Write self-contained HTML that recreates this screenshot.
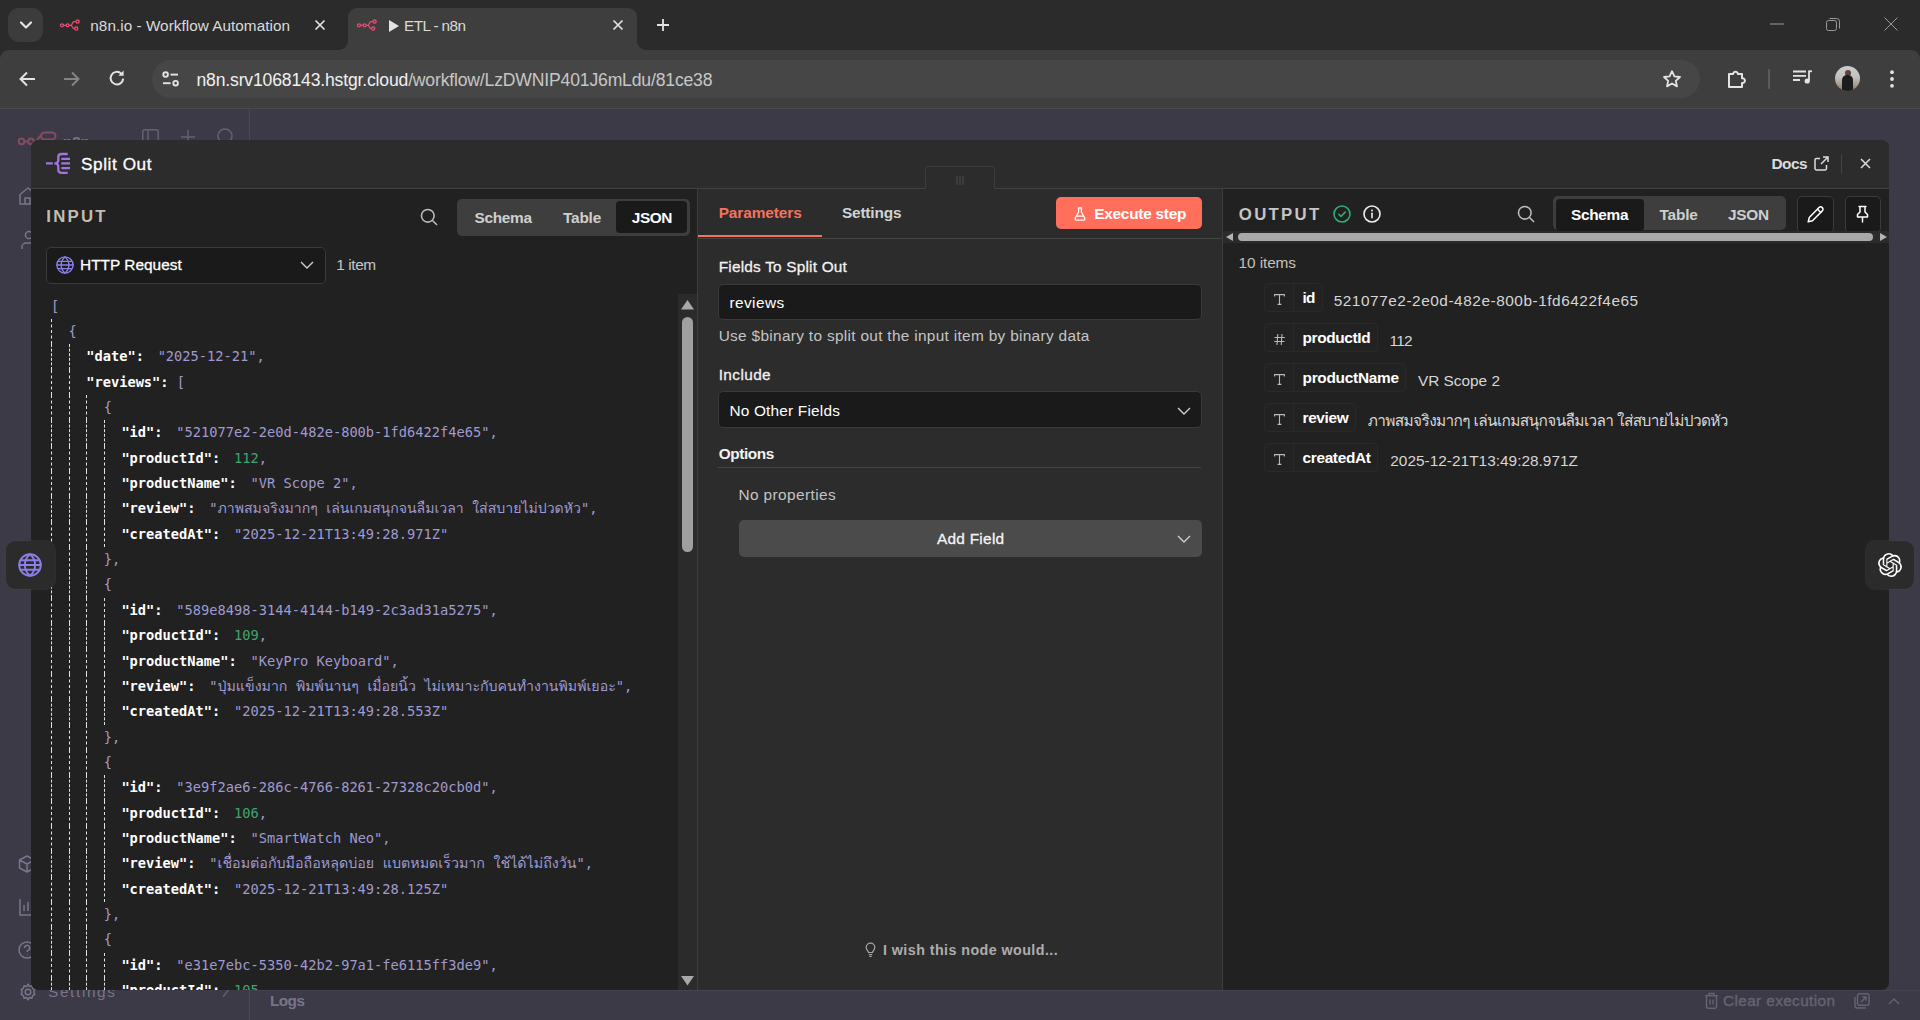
<!DOCTYPE html>
<html lang="en"><head><meta charset="utf-8"><title>ETL - n8n</title>
<style>
*{box-sizing:border-box;margin:0;padding:0}
html,body{width:1920px;height:1020px;overflow:hidden;background:#3c3a47;}
body{position:relative;font-family:"Liberation Sans","Loma","Noto Sans Thai",sans-serif;color:#fff;font-size:15px;}
.abs{position:absolute}
.t{position:absolute;white-space:nowrap;line-height:20px;height:20px;margin-top:-10px}
svg{position:absolute;overflow:visible}
/* chrome */
#tabstrip{position:absolute;left:0;top:0;width:1920px;height:62px;background:#2b2b2b}
#toolbar{position:absolute;left:0;top:50px;width:1920px;height:58px;background:#3e3e3e;border-radius:9px 9px 0 0}
#tbline{position:absolute;left:0;top:108px;width:1920px;height:1px;background:#4a4a52}
#acttab{position:absolute;left:348px;top:8px;width:289px;height:42px;background:#3e3e3e;border-radius:9px 9px 0 0}
#acttab:before,#acttab:after{content:"";position:absolute;bottom:0;width:10px;height:10px}
#acttab:before{left:-10px;background:radial-gradient(circle at 0 0,transparent 10px,#3e3e3e 10.5px)}
#acttab:after{right:-10px;background:radial-gradient(circle at 100% 0,transparent 10px,#3e3e3e 10.5px)}
#tabsearch{position:absolute;left:8px;top:8px;width:35px;height:34px;border-radius:11px;background:#3c3c3c}
#omni{position:absolute;left:152px;top:60px;width:1548px;height:38px;border-radius:19px;background:#464646}
.ctxt{color:#e3e3e3;font-size:15.5px}
/* page */
#page{position:absolute;left:0;top:109px;width:1920px;height:911px;background:#3c3a47}
.dim{color:#6f6d7c}
/* modal */
#modal{position:absolute;left:31px;top:140px;width:1858px;height:850px;border-radius:8px;background:#2c2c2c;overflow:hidden}
.tog{position:absolute;background:#3e3e3e;border-radius:5px}
.togact{position:absolute;background:#1a1a1a;border-radius:4px}
.field{position:absolute;background:#1a1a1a;border:1px solid #3a3a3a;border-radius:5px}
/* json */
#json{position:absolute;left:20px;top:104px;width:640px;height:700px;overflow:hidden;font-family:"DejaVu Sans Mono","Liberation Mono","Loma","Noto Sans Thai",monospace;font-size:13.7px;}
.jl{height:25.36px;line-height:25.36px;white-space:nowrap;display:flex}
.iu{display:inline-block;width:17.6px;height:25.36px;border-left:1px dashed #e2e2e2;flex:none}
.jc{padding-left:0}
.s,.n{margin-left:13.75px}
.b2{margin-left:8.25px}
.k{color:#fff;font-weight:bold}
.s{color:#a09ad0}
.br{color:#a09ad0}
.c{color:#a09ad0}
.n{color:#3fa66f}
/* schema */
.pill{position:absolute;height:29px;border:1px solid #292929;border-radius:4px;background:#222}
.pill .ic{position:absolute;left:0;top:0;width:29px;height:27px;border-right:1px solid #292929}
.sv{color:#d0d0d0}

</style></head>
<body>
<div id="tabstrip"></div>
<div id="tabsearch"></div>
<svg style="left:19px;top:20px" width="14" height="10" viewBox="0 0 14 10"><path d="M2 2.5 L7 7.5 L12 2.5" fill="none" stroke="#e3e3e3" stroke-width="2.2" stroke-linecap="round" stroke-linejoin="round"/></svg>
<div id="toolbar"></div>
<div id="acttab"></div>
<div id="tbline"></div>
<!-- favicons -->
<svg class="fav" style="left:60px;top:19px" width="21" height="13" viewBox="0 0 21 13"><g fill="none" stroke="#ea4b71" stroke-width="1.3"><circle cx="2" cy="6.3" r="1.5"/><circle cx="7.6" cy="6.3" r="1.5"/><circle cx="17.6" cy="2.6" r="1.6"/><circle cx="16.2" cy="9.6" r="1.6"/><path d="M3.5 6.3h2.6M9.1 6.3h1.6c1.6 0 1.4-3.6 3.4-3.6h1.9M10.7 6.3c1.8 0 1.5 3.3 3.3 3.3h.6"/></g></svg>
<svg class="fav" style="left:357px;top:19px" width="21" height="13" viewBox="0 0 21 13"><g fill="none" stroke="#ea4b71" stroke-width="1.3"><circle cx="2" cy="6.3" r="1.5"/><circle cx="7.6" cy="6.3" r="1.5"/><circle cx="17.6" cy="2.6" r="1.6"/><circle cx="16.2" cy="9.6" r="1.6"/><path d="M3.5 6.3h2.6M9.1 6.3h1.6c1.6 0 1.4-3.6 3.4-3.6h1.9M10.7 6.3c1.8 0 1.5 3.3 3.3 3.3h.6"/></g></svg>
<div class="t" id="tab1" style="left:90.3px;top:26px;font-size:15.3px;letter-spacing:0.037px;color:#dadada">n8n.io - Workflow Automation</div>
<svg style="left:314px;top:19px" width="12" height="12" viewBox="0 0 12 12"><path d="M1.5 1.5l9 9M10.5 1.5l-9 9" stroke="#e3e3e3" stroke-width="1.7" fill="none"/></svg>
<svg style="left:388px;top:19px" width="12" height="14" viewBox="0 0 12 14"><path d="M1 1l10 6-10 6z" fill="#e3e3e3"/></svg>
<div class="t" id="tab2" style="left:404px;top:26px;font-size:15.3px;letter-spacing:-0.576px;color:#dadada">ETL - n8n</div>
<svg style="left:612px;top:19px" width="12" height="12" viewBox="0 0 12 12"><path d="M1.5 1.5l9 9M10.5 1.5l-9 9" stroke="#e3e3e3" stroke-width="1.7" fill="none"/></svg>
<svg style="left:656px;top:18px" width="14" height="14" viewBox="0 0 14 14"><path d="M7 1v12M1 7h12" stroke="#e3e3e3" stroke-width="1.8" fill="none"/></svg>
<!-- window controls -->
<svg style="left:1770px;top:23px" width="14" height="2" viewBox="0 0 14 2"><path d="M0 1h14" stroke="#9a9a9a" stroke-width="1"/></svg>
<svg style="left:1826px;top:17px" width="14" height="14" viewBox="0 0 14 14"><rect x=".5" y="3.5" width="10" height="10" rx="2" fill="none" stroke="#9a9a9a"/><path d="M3.5 1.5h7a3 3 0 0 1 3 3v7" fill="none" stroke="#9a9a9a"/></svg>
<svg style="left:1884px;top:17px" width="14" height="14" viewBox="0 0 14 14"><path d="M.5.5l13 13M13.5.5l-13 13" stroke="#9a9a9a" stroke-width="1" fill="none"/></svg>
<!-- toolbar icons -->
<svg style="left:19px;top:71px" width="17" height="16" viewBox="0 0 17 16"><path d="M8 1.5L1.5 8 8 14.5M1.8 8H16" fill="none" stroke="#e3e3e3" stroke-width="2" stroke-linejoin="miter"/></svg>
<svg style="left:63px;top:71px" width="17" height="16" viewBox="0 0 17 16"><path d="M9 1.5L15.5 8 9 14.5M15.2 8H1" fill="none" stroke="#858585" stroke-width="2"/></svg>
<svg style="left:108px;top:69px" width="18" height="18" viewBox="0 0 18 18"><path d="M15.2 9.6A6.3 6.3 0 1 1 13.3 4.6" fill="none" stroke="#e3e3e3" stroke-width="2"/><path d="M15.6 1.6v5.2h-5.2z" fill="#e3e3e3"/></svg>
<div id="omni"></div>
<svg style="left:162px;top:71px" width="18" height="16" viewBox="0 0 18 16"><g fill="none" stroke="#e3e3e3" stroke-width="1.9"><circle cx="3.6" cy="3.6" r="2.3"/><path d="M8.5 3.6H16"/><circle cx="13.6" cy="12.2" r="2.3"/><path d="M1 12.2h7.6"/></g></svg>
<div class="t" id="url" style="left:196.5px;top:79.5px;font-size:17.6px;letter-spacing:-0.175px;color:#c6c6c6"><span style="color:#f0f0f0">n8n.srv1068143.hstgr.cloud</span>/workflow/LzDWNIP401J6mLdu/81ce38</div>
<svg style="left:1662px;top:69px" width="20" height="20" viewBox="0 0 20 20"><path d="M10 2.2l2.4 5.2 5.6.6-4.2 3.8 1.2 5.6L10 14.5l-5 2.9 1.2-5.6L2 8l5.6-.6z" fill="none" stroke="#e3e3e3" stroke-width="1.8" stroke-linejoin="round"/></svg>
<svg style="left:1726px;top:68px" width="21" height="21" viewBox="0 0 21 21"><path d="M3 6h4.2a2.3 2.3 0 1 1 4.6 0H16v4.3a2.4 2.4 0 1 1 0 4.7V19H3z" fill="none" stroke="#e3e3e3" stroke-width="2" stroke-linejoin="round"/></svg>
<div class="abs" style="left:1768px;top:69px;width:2px;height:20px;background:#5c5c5c;border-radius:1px"></div>
<svg style="left:1792px;top:69px" width="20" height="16" viewBox="0 0 20 16"><g fill="none" stroke="#e3e3e3" stroke-width="1.8"><path d="M1 2.5h13M1 6.8h13M1 11h7"/><path d="M17 1.5v10"/><path d="M17 2.3h3"/></g><circle cx="15.2" cy="12" r="2.6" fill="#e3e3e3"/></svg>
<div class="abs" style="left:1835px;top:66px;width:25px;height:25px;border-radius:13px;background:linear-gradient(180deg,#c9cdd2 0%,#c4c0bb 45%,#a59a90 75%,#7d7369 100%);overflow:hidden"><div class="abs" style="left:10px;top:3.500px;width:5.500px;height:6px;border-radius:3px;background:#5a4238"></div><div class="abs" style="left:7px;top:8.500px;width:11px;height:17px;border-radius:5px 5px 2px 2px;background:#1c1c1e"></div></div>
<svg style="left:1890px;top:70px" width="4" height="18" viewBox="0 0 4 18"><circle cx="2" cy="2.2" r="1.9" fill="#e3e3e3"/><circle cx="2" cy="9" r="1.9" fill="#e3e3e3"/><circle cx="2" cy="15.8" r="1.9" fill="#e3e3e3"/></svg>

<div id="page"></div>
<div class="abs" id="logline" style="left:250px;top:990px;width:1670px;height:1px;background:#45434f"></div>
<div class="abs" style="left:249px;top:109px;width:1px;height:911px;background:#4a4856"></div>
<!-- dim n8n logo + header icons (mostly hidden) -->
<svg style="left:17px;top:130px" width="42" height="18" viewBox="0 0 42 18"><g fill="none" stroke="#874a61" stroke-width="2"><circle cx="4.500" cy="11.400" r="2.800"/><circle cx="14" cy="11.400" r="2.800"/><rect x="24" y="2.500" width="14.500" height="7" rx="3.500"/><path d="M7.300 11.400h3.900M16.800 11.400h2c2.500 0 2.200-5.400 5.200-5.400"/></g></svg>
<div class="t" id="un8n" style="left:62.7px;top:141.5px;font-size:15px;letter-spacing:0.314px;font-weight:bold;color:#77758a">n8n</div>
<svg style="left:142px;top:129px" width="17" height="16" viewBox="0 0 17 16"><g fill="none" stroke="#636173" stroke-width="1.5"><rect x=".8" y=".8" width="15.4" height="14.4" rx="2"/><path d="M6 .8v14.4"/></g></svg>
<svg style="left:181px;top:130px" width="14" height="14" viewBox="0 0 14 14"><path d="M7 0v14M0 7h14" stroke="#636173" stroke-width="1.5"/></svg>
<svg style="left:217px;top:128px" width="17" height="17" viewBox="0 0 17 17"><circle cx="8" cy="8" r="7" fill="none" stroke="#636173" stroke-width="1.5"/></svg>
<!-- left sidebar icons -->
<svg style="left:19px;top:187px" width="16" height="18" viewBox="0 0 16 18"><path d="M1 17V7.5L9 1l6 5v11z" fill="none" stroke="#77758a" stroke-width="1.5" stroke-linejoin="round"/><path d="M6 17v-6h5v6" fill="none" stroke="#77758a" stroke-width="1.5"/></svg>
<svg style="left:21px;top:230px" width="16" height="20" viewBox="0 0 16 20"><circle cx="8" cy="5" r="3.6" fill="none" stroke="#77758a" stroke-width="1.5"/><path d="M1 19v-2a4 4 0 0 1 4-4h8" fill="none" stroke="#77758a" stroke-width="1.5"/></svg>
<svg style="left:18px;top:855px" width="18" height="18" viewBox="0 0 18 18"><path d="M9 1L1.5 5v8L9 17l7.500-4V5z M1.500 5L9 9l7.500-4M9 9v8" fill="none" stroke="#77758a" stroke-width="1.5" stroke-linejoin="round"/></svg>
<svg style="left:19px;top:898px" width="16" height="18" viewBox="0 0 16 18"><path d="M1 1v16h14M5 13V7M9 13V4M13 13v-4" fill="none" stroke="#77758a" stroke-width="1.5"/></svg>
<svg style="left:18px;top:941px" width="18" height="18" viewBox="0 0 18 18"><circle cx="9" cy="9" r="8" fill="none" stroke="#77758a" stroke-width="1.5"/><path d="M6.500 7a2.600 2.600 0 1 1 3.500 2.400c-.7.300-1 .8-1 1.600M9 13.500v.5" fill="none" stroke="#77758a" stroke-width="1.5"/></svg>
<svg style="left:19px;top:983px" width="18" height="18" viewBox="0 0 18 18"><circle cx="9" cy="9" r="2.800" fill="none" stroke="#77758a" stroke-width="1.500"/><path d="M9 1.200l1.300 2.300 2.600-.7.700 2.600 2.300 1.300-1.200 2.300 1.200 2.300-2.300 1.300-.7 2.600-2.600-.7L9 16.800l-1.300-2.300-2.600.7-.7-2.600-2.300-1.300L3.300 9 2.100 6.700l2.300-1.300.7-2.600 2.600.7z" fill="none" stroke="#77758a" stroke-width="1.500" stroke-linejoin="round"/></svg>
<div class="t" id="uset" style="left:48px;top:992px;font-size:15.4px;letter-spacing:1.625px;color:#77758a">Settings</div>
<svg style="left:222px;top:988px" width="8" height="10" viewBox="0 0 8 10"><path d="M1 9l6-8" stroke="#636173" stroke-width="1.300"/></svg>
<div class="t" id="logs" style="left:270px;top:1001px;font-size:15.4px;letter-spacing:-0.589px;font-weight:bold;color:#77758a">Logs</div>
<!-- bottom right -->
<svg style="left:1704px;top:992px" width="15" height="17" viewBox="0 0 15 17"><g fill="none" stroke="#656373" stroke-width="1.400"><path d="M1 3.700h13M5 3.700V1.500h5v2.200M2.500 3.700v11a1.500 1.500 0 0 0 1.500 1.500h7a1.500 1.500 0 0 0 1.500-1.500v-11M6 7.500v5M9 7.500v5"/></g></svg>
<div class="t" id="clearex" style="left:1723px;top:1001px;font-size:15.4px;letter-spacing:0.360px;-webkit-text-stroke:0.4px currentColor;color:#656373">Clear execution</div>
<svg style="left:1854px;top:993px" width="16" height="16" viewBox="0 0 16 16"><g fill="none" stroke="#656373" stroke-width="1.400"><rect x="3.500" y=".8" width="11.500" height="11.500" rx="2"/><path d="M1 4v9a2 2 0 0 0 2 2h9M7 9l5-5M8.500 4H12v3.500"/></g></svg>
<svg style="left:1888px;top:997px" width="12" height="8" viewBox="0 0 12 8"><path d="M1 7l5-5 5 5" fill="none" stroke="#656373" stroke-width="1.400"/></svg>

<div id="modal"><div class="abs" style="left:-31px;top:-140px;width:1920px;height:1020px">
<!-- panels (page coords) -->
<div class="abs" style="left:31px;top:140px;width:1858px;height:49px;background:#2c2c2c"></div>
<div class="abs" style="left:31px;top:188px;width:1858px;height:1px;background:#414141"></div>
<div class="abs" id="pin" style="left:31px;top:189px;width:666px;height:801px;background:#212121"></div>
<div class="abs" id="pmain" style="left:697px;top:189px;width:526px;height:801px;background:#2c2c2c;border-left:1px solid #3d3d3d;border-right:1px solid #3d3d3d"></div>
<div class="abs" id="pout" style="left:1223px;top:189px;width:666px;height:801px;background:#212121"></div>
<!-- drag handle -->
<div class="abs" style="left:925px;top:166px;width:70px;height:23px;background:#2c2c2c;border:1px solid #3c3c3c;border-bottom:none;border-radius:4px 4px 0 0"></div>
<svg style="left:956px;top:176px" width="8" height="9" viewBox="0 0 8 9"><path d="M1 0v9M4 0v9M7 0v9" stroke="#4d4d4d" stroke-width="1"/></svg>
<!-- header -->
<svg style="left:46px;top:152px" width="24" height="23" viewBox="0 0 24 23"><g fill="none" stroke="#a373de" stroke-width="2.300"><path d="M0 11.400h6.800"/><path d="M21.700 2H15.500c-2.200 0-3.200 1-3.200 3v2.900c0 2.200-1.400 3.500-3.900 3.500c2.500 0 3.900 1.300 3.900 3.500v2.900c0 2 1 3 3.200 3h6.200"/><path d="M15.300 6.800H24M15.300 11.400H24M15.300 16.100H24"/></g></svg>
<div class="t" id="ttl" style="left:81px;top:163.5px;font-size:17.2px;letter-spacing:0.572px;-webkit-text-stroke:0.28px currentColor;color:#fff">Split Out</div>
<div class="t" id="docs" style="left:1771.5px;top:163.5px;font-size:15.4px;letter-spacing:-0.547px;font-weight:bold;color:#dcdcdc">Docs</div>
<svg style="left:1814px;top:156px" width="15" height="15" viewBox="0 0 15 15"><g fill="none" stroke="#dcdcdc" stroke-width="1.500"><path d="M6 2.500H2.500a1.500 1.500 0 0 0-1.500 1.500v8.500A1.500 1.500 0 0 0 2.500 14H11a1.500 1.500 0 0 0 1.500-1.500V9"/><path d="M9 1h5v5M14 1L7 8"/></g></svg>
<div class="abs" style="left:1841px;top:154px;width:1px;height:20px;background:#444"></div>
<svg style="left:1860px;top:158px" width="11" height="11" viewBox="0 0 11 11"><path d="M1 1l9 9M10 1l-9 9" stroke="#dcdcdc" stroke-width="1.500" fill="none"/></svg>

<!-- INPUT panel -->
<div class="t" id="inlab" style="left:46.3px;top:217px;font-size:16.8px;letter-spacing:2.239px;font-weight:bold;color:#c2bdb3">INPUT</div>
<svg style="left:419.500px;top:208.200px" width="18.500" height="18.500" viewBox="0 0 19 19"><g fill="none" stroke="#bdbdbd" stroke-width="1.600"><circle cx="8" cy="8" r="6.500"/><path d="M12.800 12.800l4.700 4.700"/></g></svg>
<div class="tog" style="left:457px;top:199px;width:233px;height:37px"></div>
<div class="togact" style="left:616px;top:201px;width:71px;height:32px"></div>
<div class="t" id="is" style="left:474.5px;top:217.6px;font-size:15.4px;letter-spacing:-0.306px;font-weight:bold;color:#cfcfcf">Schema</div>
<div class="t" id="it" style="left:563px;top:217.6px;font-size:15.4px;letter-spacing:-0.216px;font-weight:bold;color:#cfcfcf">Table</div>
<div class="t" id="ij" style="left:631.8px;top:217.6px;font-size:15.4px;letter-spacing:-0.407px;font-weight:bold;color:#fff">JSON</div>
<div class="field" style="left:46px;top:247px;width:279.500px;height:36.500px"></div>
<svg class="globe" style="left:56px;top:256px" width="18" height="18" viewBox="0 0 24 24"><g fill="none" stroke="#8b7fe8" stroke-width="1.800" stroke-linecap="round"><circle cx="12" cy="12" r="10.800"/><path d="M12 1.200a14 14 0 0 0 0 21.600a14 14 0 0 0 0-21.600"/><path d="M1.200 12h21.600M3 7.200h18M3 16.800h18"/></g></svg>
<div class="t" id="hreq" style="left:80px;top:264.5px;font-size:15.4px;letter-spacing:0.017px;-webkit-text-stroke:0.28px currentColor;color:#fff">HTTP Request</div>
<svg style="left:300px;top:261px" width="14" height="8" viewBox="0 0 14 8"><path d="M1 1l6 6 6-6" fill="none" stroke="#cfcfcf" stroke-width="1.400"/></svg>
<div class="t" id="oneitem" style="left:336.2px;top:264.5px;font-size:15.4px;letter-spacing:-0.384px;color:#c6c6c6">1 item</div>
<div id="json" style="left:51px;top:293.500px;width:626px;height:697px">
<div class="jl"><span class="jc"><span class="br">[</span></span></div>
<div class="jl"><i class="iu"></i><span class="jc"><span class="br">{</span></span></div>
<div class="jl"><i class="iu"></i><i class="iu"></i><span class="jc"><b class="k">"date":</b><span class="s">"2025-12-21"</span><span class="c">,</span></span></div>
<div class="jl"><i class="iu"></i><i class="iu"></i><span class="jc"><b class="k">"reviews":</b><span class="br b2">[</span></span></div>
<div class="jl"><i class="iu"></i><i class="iu"></i><i class="iu"></i><span class="jc"><span class="br">{</span></span></div>
<div class="jl"><i class="iu"></i><i class="iu"></i><i class="iu"></i><i class="iu"></i><span class="jc"><b class="k">"id":</b><span class="s">"521077e2-2e0d-482e-800b-1fd6422f4e65"</span><span class="c">,</span></span></div>
<div class="jl"><i class="iu"></i><i class="iu"></i><i class="iu"></i><i class="iu"></i><span class="jc"><b class="k">"productId":</b><span class="n">112</span><span class="c">,</span></span></div>
<div class="jl"><i class="iu"></i><i class="iu"></i><i class="iu"></i><i class="iu"></i><span class="jc"><b class="k">"productName":</b><span class="s">"VR Scope 2"</span><span class="c">,</span></span></div>
<div class="jl"><i class="iu"></i><i class="iu"></i><i class="iu"></i><i class="iu"></i><span class="jc"><b class="k">"review":</b><span class="s">"<span id="th0" style="font-size:14.08px">ภาพสมจริงมากๆ เล่นเกมสนุกจนลืมเวลา ใส่สบายไม่ปวดหัว</span>"</span><span class="c">,</span></span></div>
<div class="jl"><i class="iu"></i><i class="iu"></i><i class="iu"></i><i class="iu"></i><span class="jc"><b class="k">"createdAt":</b><span class="s">"2025-12-21T13:49:28.971Z"</span></span></div>
<div class="jl"><i class="iu"></i><i class="iu"></i><i class="iu"></i><span class="jc"><span class="br">}</span><span class="c">,</span></span></div>
<div class="jl"><i class="iu"></i><i class="iu"></i><i class="iu"></i><span class="jc"><span class="br">{</span></span></div>
<div class="jl"><i class="iu"></i><i class="iu"></i><i class="iu"></i><i class="iu"></i><span class="jc"><b class="k">"id":</b><span class="s">"589e8498-3144-4144-b149-2c3ad31a5275"</span><span class="c">,</span></span></div>
<div class="jl"><i class="iu"></i><i class="iu"></i><i class="iu"></i><i class="iu"></i><span class="jc"><b class="k">"productId":</b><span class="n">109</span><span class="c">,</span></span></div>
<div class="jl"><i class="iu"></i><i class="iu"></i><i class="iu"></i><i class="iu"></i><span class="jc"><b class="k">"productName":</b><span class="s">"KeyPro Keyboard"</span><span class="c">,</span></span></div>
<div class="jl"><i class="iu"></i><i class="iu"></i><i class="iu"></i><i class="iu"></i><span class="jc"><b class="k">"review":</b><span class="s">"<span id="th1" style="font-size:14.16px">ปุ่มแข็งมาก พิมพ์นานๆ เมื่อยนิ้ว ไม่เหมาะกับคนทำงานพิมพ์เยอะ</span>"</span><span class="c">,</span></span></div>
<div class="jl"><i class="iu"></i><i class="iu"></i><i class="iu"></i><i class="iu"></i><span class="jc"><b class="k">"createdAt":</b><span class="s">"2025-12-21T13:49:28.553Z"</span></span></div>
<div class="jl"><i class="iu"></i><i class="iu"></i><i class="iu"></i><span class="jc"><span class="br">}</span><span class="c">,</span></span></div>
<div class="jl"><i class="iu"></i><i class="iu"></i><i class="iu"></i><span class="jc"><span class="br">{</span></span></div>
<div class="jl"><i class="iu"></i><i class="iu"></i><i class="iu"></i><i class="iu"></i><span class="jc"><b class="k">"id":</b><span class="s">"3e9f2ae6-286c-4766-8261-27328c20cb0d"</span><span class="c">,</span></span></div>
<div class="jl"><i class="iu"></i><i class="iu"></i><i class="iu"></i><i class="iu"></i><span class="jc"><b class="k">"productId":</b><span class="n">106</span><span class="c">,</span></span></div>
<div class="jl"><i class="iu"></i><i class="iu"></i><i class="iu"></i><i class="iu"></i><span class="jc"><b class="k">"productName":</b><span class="s">"SmartWatch Neo"</span><span class="c">,</span></span></div>
<div class="jl"><i class="iu"></i><i class="iu"></i><i class="iu"></i><i class="iu"></i><span class="jc"><b class="k">"review":</b><span class="s">"<span id="th2" style="font-size:14.27px">เชื่อมต่อกับมือถือหลุดบ่อย แบตหมดเร็วมาก ใช้ได้ไม่ถึงวัน</span>"</span><span class="c">,</span></span></div>
<div class="jl"><i class="iu"></i><i class="iu"></i><i class="iu"></i><i class="iu"></i><span class="jc"><b class="k">"createdAt":</b><span class="s">"2025-12-21T13:49:28.125Z"</span></span></div>
<div class="jl"><i class="iu"></i><i class="iu"></i><i class="iu"></i><span class="jc"><span class="br">}</span><span class="c">,</span></span></div>
<div class="jl"><i class="iu"></i><i class="iu"></i><i class="iu"></i><span class="jc"><span class="br">{</span></span></div>
<div class="jl"><i class="iu"></i><i class="iu"></i><i class="iu"></i><i class="iu"></i><span class="jc"><b class="k">"id":</b><span class="s">"e31e7ebc-5350-42b2-97a1-fe6115ff3de9"</span><span class="c">,</span></span></div>
<div class="jl"><i class="iu"></i><i class="iu"></i><i class="iu"></i><i class="iu"></i><span class="jc"><b class="k">"productId":</b><span class="n">105</span><span class="c">,</span></span></div>
</div>
<!-- v scrollbar -->
<div class="abs" style="left:678px;top:294px;width:19px;height:696px;background:#2b2b2b"></div>
<svg style="left:681px;top:300px" width="13" height="9.500" viewBox="0 0 13 9.500"><path d="M0 9.500L6.500 0L13 9.500z" fill="#a8a8a8"/></svg>
<div class="abs" style="left:682px;top:317px;width:11px;height:235px;border-radius:6px;background:#a0a0a0"></div>
<svg style="left:681px;top:975.500px" width="13" height="9.500" viewBox="0 0 13 9.500"><path d="M0 0L6.500 9.500L13 0z" fill="#a8a8a8"/></svg>

<!-- center panel -->
<div class="t" id="par" style="left:718.7px;top:213px;font-size:15.4px;letter-spacing:-0.095px;font-weight:bold;color:#f4735f">Parameters</div>
<div class="t" id="set" style="left:841.9px;top:213px;font-size:15.4px;letter-spacing:-0.160px;font-weight:bold;color:#d2d2d2">Settings</div>
<div class="abs" style="left:698px;top:238px;width:524px;height:1px;background:#444"></div>
<div class="abs" style="left:698px;top:234.800px;width:124px;height:2.600px;background:#f4735f"></div>
<div class="abs" style="left:1056px;top:197px;width:146px;height:32px;border-radius:5px;background:#ff6f5c"></div>
<svg style="left:1073.500px;top:206.800px" width="12" height="13.800" viewBox="0 0 13 15"><g fill="none" stroke="#fff" stroke-width="1.400" stroke-linejoin="round"><path d="M4.200 1h4.600M5 1v4.500L1.300 12.300c-.5 1 .2 1.900 1.200 1.900h8c1 0 1.700-.9 1.200-1.900L8 5.500V1"/><path d="M3 10h7"/></g></svg>
<div class="t" id="exe" style="left:1094.2px;top:213.5px;font-size:15.4px;letter-spacing:-0.250px;font-weight:bold;color:#fff">Execute step</div>
<div class="t" id="ftso" style="left:718.7px;top:267px;font-size:15.4px;letter-spacing:0.199px;-webkit-text-stroke:0.28px currentColor;color:#f2f2f2">Fields To Split Out</div>
<div class="field" style="left:718px;top:284px;width:484px;height:36px"></div>
<div class="t" id="rev" style="left:729.4px;top:303px;font-size:15.4px;letter-spacing:0.438px;color:#fff">reviews</div>
<div class="t" id="hint" style="left:718.7px;top:336px;font-size:15.4px;letter-spacing:0.312px;color:#c4c4c4">Use $binary to split out the input item by binary data</div>
<div class="t" id="inc" style="left:718.7px;top:375.3px;font-size:15.4px;letter-spacing:0.393px;-webkit-text-stroke:0.28px currentColor;color:#f2f2f2">Include</div>
<div class="field" style="left:718px;top:391px;width:484px;height:37px"></div>
<div class="t" id="nof" style="left:729.4px;top:411px;font-size:15.4px;letter-spacing:0.194px;color:#fff">No Other Fields</div>
<svg style="left:1177px;top:407px" width="14" height="8" viewBox="0 0 14 8"><path d="M1 1l6 6 6-6" fill="none" stroke="#cfcfcf" stroke-width="1.400"/></svg>
<div class="t" id="opt" style="left:718.7px;top:454px;font-size:15.4px;letter-spacing:-0.407px;font-weight:bold;color:#f2f2f2">Options</div>
<div class="abs" style="left:718px;top:467px;width:483px;height:1px;background:#444"></div>
<div class="t" id="nop" style="left:738.4px;top:494.8px;font-size:15.4px;letter-spacing:0.409px;color:#c4c4c4">No properties</div>
<div class="abs" style="left:738.500px;top:520px;width:463.500px;height:37px;border-radius:5px;background:#4b4b4b"></div>
<div class="t" id="addf" style="left:936.9px;top:538.5px;font-size:15.4px;letter-spacing:0.284px;-webkit-text-stroke:0.28px currentColor;color:#f4f4f4">Add Field</div>
<svg style="left:1177px;top:535px" width="14" height="8" viewBox="0 0 14 8"><path d="M1 1l6 6 6-6" fill="none" stroke="#cfcfcf" stroke-width="1.400"/></svg>
<svg style="left:865px;top:942px" width="11" height="15" viewBox="0 0 11 15"><g fill="none" stroke="#a8a8a8" stroke-width="1.200"><path d="M3.500 10.500c0-1.600-2.300-2.500-2.300-5a4.300 4.300 0 0 1 8.600 0c0 2.500-2.300 3.400-2.300 5z"/><path d="M3.800 12.500h3.400M4.300 14.300h2.400"/></g></svg>
<div class="t" id="wish" style="left:883px;top:949.6px;font-size:14.3px;letter-spacing:0.428px;font-weight:bold;color:#adadad">I wish this node would...</div>

<!-- OUTPUT panel -->
<div class="t" id="outlab" style="left:1238.8px;top:214.7px;font-size:16.8px;letter-spacing:2.280px;font-weight:bold;color:#c6c6c6">OUTPUT</div>
<svg style="left:1333px;top:205px" width="18" height="18" viewBox="0 0 18 18"><g fill="none" stroke="#2fac74" stroke-width="1.600"><circle cx="9" cy="9" r="8"/><path d="M5.800 9.300l2.200 2.200 4.200-4.400" stroke-linecap="round" stroke-linejoin="round"/></g></svg>
<svg style="left:1363px;top:205px" width="18" height="18" viewBox="0 0 18 18"><g fill="none" stroke="#ececec" stroke-width="1.600"><circle cx="9" cy="9" r="8"/><path d="M9 8.300v4.500" stroke-linecap="round"/></g><circle cx="9" cy="5.500" r="1" fill="#ececec"/></svg>
<svg style="left:1516.500px;top:205.200px" width="18.500" height="18.500" viewBox="0 0 19 19"><g fill="none" stroke="#bdbdbd" stroke-width="1.600"><circle cx="8" cy="8" r="6.500"/><path d="M12.800 12.800l4.700 4.700"/></g></svg>
<div class="tog" style="left:1553px;top:196px;width:233px;height:34px"></div>
<div class="togact" style="left:1556px;top:198.500px;width:88px;height:32px"></div>
<div class="t" id="os" style="left:1571px;top:215.1px;font-size:15.4px;letter-spacing:-0.306px;font-weight:bold;color:#fff">Schema</div>
<div class="t" id="ot" style="left:1659.4px;top:215.1px;font-size:15.4px;letter-spacing:-0.141px;font-weight:bold;color:#cfcfcf">Table</div>
<div class="t" id="oj" style="left:1728px;top:215.1px;font-size:15.4px;letter-spacing:-0.307px;font-weight:bold;color:#cfcfcf">JSON</div>
<div class="field" style="left:1796.500px;top:196px;width:37px;height:37px"></div>
<div class="field" style="left:1844.500px;top:196px;width:36px;height:37px"></div>
<svg style="left:1807px;top:206px" width="17" height="17" viewBox="0 0 17 17"><g fill="none" stroke="#fff" stroke-width="1.500" stroke-linejoin="round"><path d="M12 1.600a2.300 2.300 0 0 1 3.300 3.300L5.500 14.700 1.200 15.800l1.100-4.300z"/><path d="M10.500 3.200l3.300 3.300"/></g></svg>
<svg style="left:1855px;top:205px" width="15" height="19" viewBox="0 0 15 19"><g fill="none" stroke="#fff" stroke-width="1.500" stroke-linejoin="round" stroke-linecap="round"><path d="M4 1.500h7M5 1.500v5.500L2.500 9.500v2.500h10V9.500L10 7V1.500M7.500 12v5"/></g></svg>
<!-- h scrollbar -->
<div class="abs" style="left:1223px;top:231px;width:666px;height:12px;background:#2b2b2b"></div>
<svg style="left:1226px;top:233px" width="7" height="8" viewBox="0 0 7 8"><path d="M7 0L0 4L7 8z" fill="#b4b4b4"/></svg>
<div class="abs" style="left:1238px;top:233px;width:635px;height:8px;border-radius:4px;background:#a9a9a9"></div>
<svg style="left:1879.500px;top:233px" width="7" height="8" viewBox="0 0 7 8"><path d="M0 0L7 4L0 8z" fill="#b4b4b4"/></svg>
<div class="t" id="tenitems" style="left:1238.6px;top:263px;font-size:15.4px;letter-spacing:-0.110px;color:#c4c0ba">10 items</div>
<div class="pill" style="left:1263.5px;top:283.0px;width:59.0px"><div class="ic"></div></div>
<svg style="left:1273.5px;top:293.5px" width="11" height="11" viewBox="0 0 11 11"><path d="M.6 2.600V.6h9.800v2M5.500.6v9.800M3.600 10.400h3.800" fill="none" stroke="#b9b9b9" stroke-width="1.100"/></svg>
<div class="t" id="sn0" style="left:1302.5px;top:298.0px;font-size:15.4px;letter-spacing:-0.688px;font-weight:bold;color:#fff">id</div>
<div class="t" id="sv0" style="left:1333.7px;top:300.5px;font-size:15.4px;letter-spacing:0.533px;color:#d6d6d6">521077e2-2e0d-482e-800b-1fd6422f4e65</div>
<div class="pill" style="left:1263.5px;top:323.0px;width:114.1px"><div class="ic"></div></div>
<svg style="left:1273.5px;top:333.5px" width="11" height="11" viewBox="0 0 11 11"><path d="M3.800 0L3 11M8 0L7.200 11M.5 3.500h10.300M.2 7.500h10.300" fill="none" stroke="#b9b9b9" stroke-width="1.100"/></svg>
<div class="t" id="sn1" style="left:1302.5px;top:338.0px;font-size:15.4px;letter-spacing:-0.359px;font-weight:bold;color:#fff">productId</div>
<div class="t" id="sv1" style="left:1389.5px;top:340.5px;font-size:15.4px;letter-spacing:-0.700px;color:#d6d6d6">112</div>
<div class="pill" style="left:1263.5px;top:363.0px;width:142.5px"><div class="ic"></div></div>
<svg style="left:1273.5px;top:373.5px" width="11" height="11" viewBox="0 0 11 11"><path d="M.6 2.600V.6h9.800v2M5.500.6v9.800M3.600 10.400h3.800" fill="none" stroke="#b9b9b9" stroke-width="1.100"/></svg>
<div class="t" id="sn2" style="left:1302.5px;top:378.0px;font-size:15.4px;letter-spacing:-0.270px;font-weight:bold;color:#fff">productName</div>
<div class="t" id="sv2" style="left:1418px;top:380.5px;font-size:15.4px;letter-spacing:-0.016px;color:#d6d6d6">VR Scope 2</div>
<div class="pill" style="left:1263.5px;top:403.0px;width:92.2px"><div class="ic"></div></div>
<svg style="left:1273.5px;top:413.5px" width="11" height="11" viewBox="0 0 11 11"><path d="M.6 2.600V.6h9.800v2M5.500.6v9.800M3.600 10.400h3.800" fill="none" stroke="#b9b9b9" stroke-width="1.100"/></svg>
<div class="t" id="sn3" style="left:1302.5px;top:418.0px;font-size:15.4px;letter-spacing:-0.344px;font-weight:bold;color:#fff">review</div>
<div class="t" id="sv3" style="left:1367.7px;top:420.5px;font-size:15.4px;letter-spacing:-0.616px;color:#d6d6d6">ภาพสมจริงมากๆ เล่นเกมสนุกจนลืมเวลา ใส่สบายไม่ปวดหัว</div>
<div class="pill" style="left:1263.5px;top:443.0px;width:114.4px"><div class="ic"></div></div>
<svg style="left:1273.5px;top:453.5px" width="11" height="11" viewBox="0 0 11 11"><path d="M.6 2.600V.6h9.800v2M5.500.6v9.800M3.600 10.400h3.800" fill="none" stroke="#b9b9b9" stroke-width="1.100"/></svg>
<div class="t" id="sn4" style="left:1302.5px;top:458.0px;font-size:15.4px;letter-spacing:-0.325px;font-weight:bold;color:#fff">createdAt</div>
<div class="t" id="sv4" style="left:1390.3px;top:460.5px;font-size:15.4px;letter-spacing:0.013px;color:#d6d6d6">2025-12-21T13:49:28.971Z</div>
</div></div>
<!-- floating buttons -->
<div class="abs" style="left:6px;top:541px;width:49px;height:48px;border-radius:9px;background:#2b2b2b;box-shadow:0 0 0 1px rgba(70,70,70,.35)"></div>
<svg style="left:18px;top:553px" width="24" height="24" viewBox="0 0 24 24"><g fill="none" stroke="#8b7fe8" stroke-width="1.900" stroke-linecap="round"><circle cx="12" cy="12" r="10.800"/><path d="M12 1.200a14 14 0 0 0 0 21.600a14 14 0 0 0 0-21.600"/><path d="M1.200 12h21.600M3 7.200h18M3 16.800h18"/></g></svg>
<div class="abs" style="left:1866px;top:541px;width:48px;height:48px;border-radius:9px;background:#2b2b2b;box-shadow:0 0 0 1px rgba(70,70,70,.35)"></div>
<svg style="left:1878px;top:553px" width="24" height="24" viewBox="0 0 24 24"><path fill="#fff" d="M22.2819 9.8211a5.9847 5.9847 0 0 0-.5157-4.9108 6.0462 6.0462 0 0 0-6.5098-2.9A6.0651 6.0651 0 0 0 4.9807 4.1818a5.9847 5.9847 0 0 0-3.9977 2.9 6.0462 6.0462 0 0 0 .7427 7.0966 5.98 5.98 0 0 0 .511 4.9107 6.051 6.051 0 0 0 6.5146 2.9001A5.9847 5.9847 0 0 0 13.2599 24a6.0557 6.0557 0 0 0 5.7718-4.2058 5.9894 5.9894 0 0 0 3.9977-2.9001 6.0557 6.0557 0 0 0-.7475-7.0729zm-9.022 12.6081a4.4755 4.4755 0 0 1-2.8764-1.0408l.1419-.0804 4.7783-2.7582a.7948.7948 0 0 0 .3927-.6813v-6.7369l2.02 1.1686a.071.071 0 0 1 .038.052v5.5826a4.504 4.504 0 0 1-4.4945 4.4944zm-9.6607-4.1254a4.4708 4.4708 0 0 1-.5346-3.0137l.142.0852 4.783 2.7582a.7712.7712 0 0 0 .7806 0l5.8428-3.3685v2.3324a.0804.0804 0 0 1-.0332.0615L9.74 19.9502a4.4992 4.4992 0 0 1-6.1408-1.6464zM2.3408 7.8956a4.485 4.485 0 0 1 2.3655-1.9728V11.6a.7664.7664 0 0 0 .3879.6765l5.8144 3.3543-2.0201 1.1685a.0757.0757 0 0 1-.071 0l-4.8303-2.7865A4.504 4.504 0 0 1 2.3408 7.872zm16.5963 3.8558L13.1038 8.364 15.1192 7.2a.0757.0757 0 0 1 .071 0l4.8303 2.7913a4.4944 4.4944 0 0 1-.6765 8.1042v-5.6772a.79.79 0 0 0-.407-.667zm2.0107-3.0231l-.142-.0852-4.7735-2.7818a.7759.7759 0 0 0-.7854 0L9.409 9.2297V6.8974a.0662.0662 0 0 1 .0284-.0615l4.8303-2.7866a4.4992 4.4992 0 0 1 6.6802 4.66zM8.3065 12.863l-2.02-1.1638a.0804.0804 0 0 1-.038-.0567V6.0742a4.4992 4.4992 0 0 1 7.3757-3.4537l-.142.0805L8.704 5.459a.7948.7948 0 0 0-.3927.6813zm1.0976-2.3654l2.602-1.4998 2.6069 1.4998v2.9994l-2.5974 1.4997-2.6067-1.4997Z"/></svg>

</body></html>
